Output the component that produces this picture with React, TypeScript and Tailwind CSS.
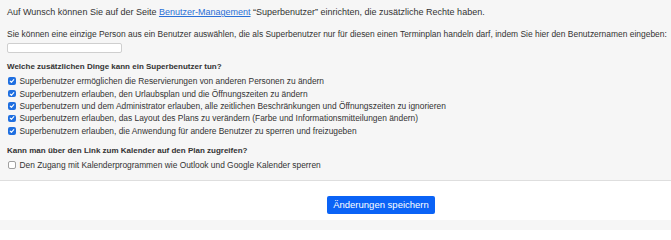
import React from 'react';

const superOptions = [
  'Superbenutzer ermöglichen die Reservierungen von anderen Personen zu ändern',
  'Superbenutzern erlauben, den Urlaubsplan und die Öffnungszeiten zu ändern',
  'Superbenutzern und dem Administrator erlauben, alle zeitlichen Beschränkungen und Öffnungszeiten zu ignorieren',
  'Superbenutzern erlauben, das Layout des Plans zu verändern (Farbe und Informationsmitteilungen ändern)',
  'Superbenutzern erlauben, die Anwendung für andere Benutzer zu sperren und freizugeben',
];

const Check: React.FC<{ checked?: boolean; label: string }> = ({ checked, label }) => (
  <label className="flex items-center gap-[4px] h-[12.4px] text-[8.4px]">
    {checked ? (
      <span className="flex items-center justify-center w-[7.5px] h-[7.5px] rounded-[2px] bg-[#1f6fe0]">
        <svg viewBox="0 0 10 10" className="w-[6px] h-[6px]">
          <path d="M2 5.2l2 2 4-4.4" fill="none" stroke="#fff" strokeWidth="1.8" strokeLinecap="round" strokeLinejoin="round" />
        </svg>
      </span>
    ) : (
      <span className="w-[7.5px] h-[7.5px] rounded-[2px] border border-[#a0a0a0] bg-white" />
    )}
    <span>{label}</span>
  </label>
);

export default function App() {
  return (
    <div className="w-[671px] h-[230px] bg-[#f6f6f6] text-[9px] leading-[12px] text-[#333] font-['Liberation_Sans',Arial,sans-serif]">
      <div className="px-[7px] pt-[6px] pb-[9px] border-b border-[#dedede]">
        <p className="whitespace-nowrap">
          Auf Wunsch können Sie auf der Seite{' '}
          <a className="text-[#2a6fd6] underline">Benutzer-Management</a> “Superbenutzer” einrichten, die zusätzliche Rechte haben.
        </p>
        <p className="mt-[10px] whitespace-nowrap text-[8.45px]">
          Sie können eine einzige Person aus ein Benutzer auswählen, die als Superbenutzer nur für diesen einen Terminplan handeln darf, indem Sie hier den Benutzernamen eingeben:
        </p>
        <input className="block w-[115px] h-[10px] mt-[3px] bg-white border border-[#cfcfcf] rounded-[2px]" />
        <h3 className="mt-[8px] font-bold text-[8px]">Welche zusätzlichen Dinge kann ein Superbenutzer tun?</h3>
        <div className="mt-[2px] pl-[1px]">
          {superOptions.map(o => (
            <Check key={o} checked label={o} />
          ))}
        </div>
        <h3 className="mt-[8px] font-bold text-[8px]">Kann man über den Link zum Kalender auf den Plan zugreifen?</h3>
        <div className="mt-[2px] pl-[1px]">
          <Check label="Den Zugang mit Kalenderprogrammen wie Outlook und Google Kalender sperren" />
        </div>
      </div>
      <div className="bg-white h-[39px] flex items-start pt-[15px]">
        <button className="ml-[327px] w-[108px] h-[18px] rounded-[2px] bg-[#0a63f6] text-white text-[9.5px] font-['Liberation_Sans',Arial,sans-serif]">
          Änderungen speichern
        </button>
      </div>
    </div>
  );
}
